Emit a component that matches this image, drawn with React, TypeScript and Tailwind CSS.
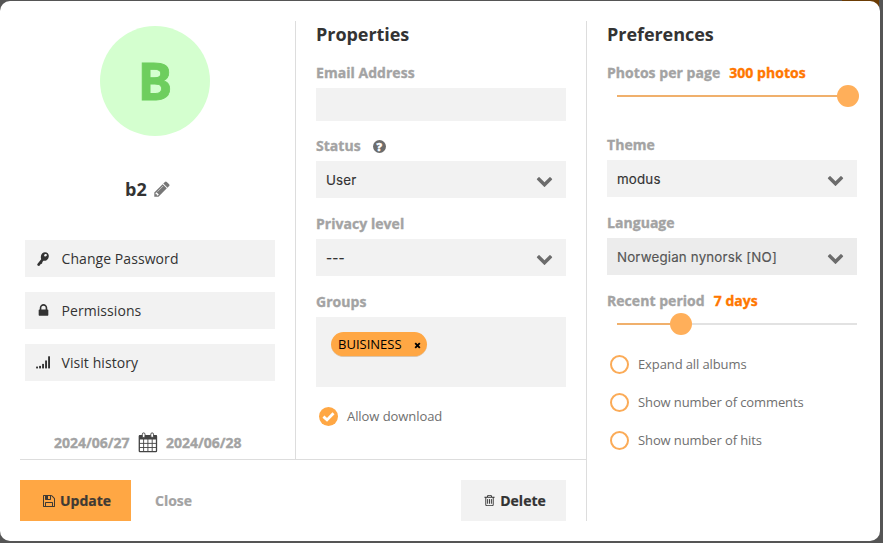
import type { ReactNode } from "react";

function FaGlyph({ d, className }: { d: string; className: string }) {
  return (
    <svg viewBox="0 0 1792 1792" fill="currentColor" className={className}>
      <path d={d} />
    </svg>
  );
}

const CHEVRON =
  "M1683 808l-742 741q-19 19-45 19t-45-19l-742-741q-19-19-19-45.5t19-45.5l166-165q19-19 45-19t45 19l531 531 531-531q19-19 45-19t45 19l166 165q19 19 19 45.5t-19 45.5z";
const PENCIL =
  "M491 1536l91-91-235-235-91 91v107h128v128h107zm523-928q0-22-22-22-10 0-17 7l-542 542q-7 7-7 17 0 22 22 22 10 0 17-7l542-542q7-7 7-17zm-54-192l416 416-832 832h-416v-416zm683 96q0 53-37 90l-166 166-416-416 166-165q36-38 90-38 53 0 91 38l235 234q37 39 37 91z";
const FLOPPY =
  "M512 1536h768v-384h-768v384zm896 0h128v-896q0-14-10-38.5t-20-34.5l-281-281q-10-10-34-20t-39-10v416q0 40-28 68t-68 28h-576q-40 0-68-28t-28-68v-416h-128v1280h128v-416q0-40 28-68t68-28h832q40 0 68 28t28 68v416zm-384-928v-320q0-13-9.5-22.5t-22.5-9.5h-192q-13 0-22.5 9.5t-9.5 22.5v320q0 13 9.5 22.5t22.5 9.5h192q13 0 22.5-9.5t9.5-22.5zm640 32v928q0 40-28 68t-68 28h-1344q-40 0-68-28t-28-68v-1344q0-40 28-68t68-28h928q40 0 88 20t76 48l280 280q28 28 48 76t20 88z";
const TRASH =
  "M704 736v576q0 14-9 23t-23 9h-64q-14 0-23-9t-9-23v-576q0-14 9-23t23-9h64q14 0 23 9t9 23zm256 0v576q0 14-9 23t-23 9h-64q-14 0-23-9t-9-23v-576q0-14 9-23t23-9h64q14 0 23 9t9 23zm256 0v576q0 14-9 23t-23 9h-64q-14 0-23-9t-9-23v-576q0-14 9-23t23-9h64q14 0 23 9t9 23zm128 724v-948h-896v948q0 22 7 40.5t14.5 27 10.5 8.5h832q3 0 10.5-8.5t14.5-27 7-40.5zm-672-1076h448l-48-117q-7-9-17-11h-317q-10 2-17 11zm928 32v64q0 14-9 23t-23 9h-96v948q0 83-47 143.5t-113 60.5h-832q-66 0-113-58.5t-47-141.5v-952h-96q-14 0-23-9t-9-23v-64q0-14 9-23t23-9h309l70-167q15-37 54-63t79-26h320q40 0 79 26t54 63l70 167h309q14 0 23 9t9 23z";
const LOCK =
  "M640 768h512v-192q0-106-75-181t-181-75-181 75-75 181v192zm832 96v576q0 40-28 68t-68 28h-960q-40 0-68-28t-28-68v-576q0-40 28-68t68-28h32v-192q0-184 132-316t316-132 316 132 132 316v192h32q40 0 68 28t28 68z";

function KeyIcon() {
  return (
    <svg viewBox="0 0 12 14" className="h-[14px] w-3" fill="none" stroke="currentColor">
      <path d="M5.6 7.6L1.6 12.6" strokeWidth="2.6" strokeLinecap="round" />
      <path d="M3.6 10.2L5 11.4" strokeWidth="1.6" />
      <path
        fill="currentColor"
        stroke="none"
        fillRule="evenodd"
        d="M8 0.2C10.3 0.2 11.8 1.7 11.8 4C11.8 6.6 10 8.8 7.5 8.8C5.200 8.800 3.800 7.400 3.800 5.200C3.800 2.400 5.600 0.200 8 0.200ZM8.600 2C7.800 2 7.100 2.700 7.100 3.400C7.100 4.100 7.700 4.500 8.400 4.500C9.200 4.500 9.900 3.900 9.900 3.100C9.900 2.400 9.400 2 8.600 2Z"
      />
    </svg>
  );
}

function SignalIcon() {
  return (
    <svg viewBox="0 0 15 13" className="h-[13px] w-[15px]" fill="currentColor">
      <rect x="0.100" y="10.600" width="1.900" height="1.800" />
      <rect x="3.100" y="9.900" width="1.900" height="2.500" />
      <rect x="6.100" y="7.900" width="1.900" height="4.500" />
      <rect x="9.100" y="4.500" width="1.900" height="7.900" />
      <rect x="12.100" y="0.300" width="1.900" height="12.100" />
    </svg>
  );
}

function CalendarIcon() {
  return (
    <svg viewBox="0 0 20 21" className="h-[21px] w-5 -translate-y-px" fill="none" stroke="#444">
      <rect x="1.300" y="3.600" width="17.200" height="16" rx="0.700" strokeWidth="1.300" />
      <path d="M1 3.500H19V7.500H1Z" fill="#444" stroke="none" />
      <path d="M5.600 7V20M9.900 7V20M14.200 7V20M1 11.400H19M1 15.500H19" strokeWidth="0.900" />
      <rect x="4.300" y="0.900" width="2.700" height="4.600" rx="1.300" fill="white" strokeWidth="0.900" />
      <rect x="12.800" y="0.900" width="2.700" height="4.600" rx="1.300" fill="white" strokeWidth="0.900" />
    </svg>
  );
}

function Label({ children }: { children: ReactNode }) {
  return (
    <div className="flex h-5 items-center whitespace-pre text-sm font-bold leading-5 tracking-[0.04px] text-[#a3a3a3] [-webkit-text-stroke:0.35px]">
      {children}
    </div>
  );
}

function Select({ value, dim = false }: { value: string; dim?: boolean }) {
  return (
    <div
      className={`flex h-[37px] w-[250px] items-center justify-between pr-[13px] pl-[10px] font-[Inter,sans-serif] text-[13.333px] tracking-[0.17px] [-webkit-text-stroke:0.15px] ${
        dim ? "bg-[#ececec] text-[#555]" : "bg-[#f2f2f2] text-[#333]"
      }`}
    >
      <span className="pt-0.5">{value}</span>
      <FaGlyph d={CHEVRON} className="mt-0.5 size-[17px] text-[#6c6c6c]" />
    </div>
  );
}

function Action({ icon, children }: { icon: ReactNode; children: ReactNode }) {
  return (
    <div className="flex h-[37px] w-[250px] items-center bg-[#f2f2f2] text-sm tracking-[0.07px] text-[#333]">
      <span className="flex w-[36.5px] justify-center">{icon}</span>
      <span>{children}</span>
    </div>
  );
}

function Slider({ percent }: { percent: number }) {
  return (
    <div className="relative ml-[10px] h-0.5 w-60 bg-[#e2e2e2]">
      <div className="h-full bg-[#f0b06c]" style={{ width: `${percent}%` }} />
      <span
        className="absolute -top-[10px] -ml-[11px] size-[22px] rounded-full bg-[#ffaf5a]"
        style={{ left: `${percent}%` }}
      />
    </div>
  );
}

function Option({ children }: { children: ReactNode }) {
  return (
    <div className="flex h-[38px] items-center gap-[9px] pl-[3px] text-[13px] tracking-[-0.11px] text-[#6f6f6f]">
      <span className="size-[19px] rounded-full border-2 border-[#fbab57]" />
      <span className="pt-0.5">{children}</span>
    </div>
  );
}

export default function App() {
  return (
    <div className="h-[543px] w-[883px] overflow-hidden bg-[#555] bg-[linear-gradient(#6b3c05,#6b3c05)] bg-[length:37px_8px] bg-[position:842px_0] bg-no-repeat pt-px font-['Open_Sans',sans-serif] text-[#333]">
      <div className="flex h-[540px] w-[880px] rounded-[10px] bg-white pt-5 pl-5">
        <div className="h-[500px] w-[567px] border-r border-[#ddd]">
          <div className="flex h-[439px] border-b border-[#ddd]">
            <section className="flex w-[276px] flex-col border-r border-[#ddd] pl-[5px]">
              <div className="mt-[5px] ml-[75px] flex size-[110px] items-center justify-center rounded-full bg-[#d4ffcf] pb-0.5 text-[52px] font-bold leading-none text-[#6ece5e] [-webkit-text-stroke:0.8px]">
                B
              </div>
              <div className="mt-[41px] flex h-6 items-center pl-[100px] text-lg font-bold">
                b2
                <FaGlyph d={PENCIL} className="ml-[6px] size-[18px] text-[#777]" />
              </div>
              <div className="mt-[39px] flex flex-col gap-[15px]">
                <Action icon={<KeyIcon />}>Change Password</Action>
                <Action icon={<FaGlyph d={LOCK} className="size-[15px]" />}>Permissions</Action>
                <Action icon={<SignalIcon />}>Visit history</Action>
              </div>
              <div className="mt-[51px] flex h-[22px] items-center pl-[29px] text-sm font-bold text-[#a3a3a3] [-webkit-text-stroke:0.35px]">
                <span className="w-[84px]">2024/06/27</span>
                <CalendarIcon />
                <span className="ml-2">2024/06/28</span>
              </div>
            </section>
            <section className="w-[290px] pl-5">
              <h2 className="flex h-[25px] items-center text-lg font-bold tracking-[-0.05px]">Properties</h2>
              <div className="mt-[17px]">
                <Label>Email Address</Label>
              </div>
              <div className="mt-[5px] h-[33px] w-[250px] bg-[#f2f2f2]" />
              <div className="mt-[15px]">
                <Label>
                  Status
                  <span className="ml-3 flex size-[13px] items-center justify-center rounded-full bg-[#6c6c6c] text-[11px] font-extrabold leading-none text-white">
                    ?
                  </span>
                </Label>
              </div>
              <div className="mt-[5px]">
                <Select value="User" />
              </div>
              <div className="mt-4">
                <Label>Privacy level</Label>
              </div>
              <div className="mt-[5px]">
                <Select value="---" />
              </div>
              <div className="mt-4">
                <Label>Groups</Label>
              </div>
              <div className="mt-[5px] h-[70px] w-[250px] bg-[#f2f2f2] pt-[15px] pl-[15px]">
                <div className="flex h-[25px] w-24 items-center justify-between rounded-full border-b border-[#d9c5ad] bg-[#ffa744] pt-0.5 pr-[6px] pl-[7px] text-[13px] text-black">
                  <span>BUISINESS</span>
                  <svg viewBox="0 0 7 7" className="size-[7px]" stroke="currentColor" strokeWidth="1.900">
                    <path d="M1.200 1.200L5.800 5.800M5.800 1.200L1.200 5.800" />
                  </svg>
                </div>
              </div>
              <div className="mt-[19px] flex h-5 items-center gap-[9px] pl-[3px] text-[13px] tracking-[-0.07px] text-[#6f6f6f]">
                <svg viewBox="0 0 19 19" className="size-[19px]">
                  <circle cx="9.500" cy="9.500" r="9.500" fill="#ffa744" />
                  <path d="M4.400 9.600L8 12.900L14.500 6.200" fill="none" stroke="white" strokeWidth="2.800" />
                </svg>
                <span className="pt-0.5">Allow download</span>
              </div>
            </section>
          </div>
          <div className="flex items-center pt-5 text-sm font-bold [-webkit-text-stroke:0.2px]">
            <button className="flex h-[41px] w-[111px] items-center justify-center gap-1 bg-[#ffa744] pl-0.5 text-[#3f3a34]">
              <FaGlyph d={FLOPPY} className="size-[14px]" />
              Update
            </button>
            <button className="ml-6 text-[#a3a3a3]">Close</button>
            <button className="mr-5 ml-auto flex h-[41px] w-[105px] items-center justify-center gap-1 bg-[#f2f2f2] pl-0.5">
              <FaGlyph d={TRASH} className="size-[13px]" />
              Delete
            </button>
          </div>
        </div>
        <section className="w-[270px] pl-5">
          <h2 className="flex h-[25px] items-center text-lg font-bold tracking-[-0.05px]">Preferences</h2>
          <div className="mt-[17px]">
            <Label>
              Photos per page<span className="ml-[9px] text-[#ff7700]">300 photos</span>
            </Label>
          </div>
          <div className="mt-3">
            <Slider percent={96.25} />
          </div>
          <div className="mt-[38px]">
            <Label>Theme</Label>
          </div>
          <div className="mt-[5px]">
            <Select value="modus" />
          </div>
          <div className="mt-4">
            <Label>Language</Label>
          </div>
          <div className="mt-[5px]">
            <Select value="Norwegian nynorsk [NO]" dim />
          </div>
          <div className="mt-4">
            <Label>
              Recent period<span className="ml-[9px] text-[#ff7700]">7 days</span>
            </Label>
          </div>
          <div className="mt-3">
            <Slider percent={26.8} />
          </div>
          <div className="mt-5">
            <Option>Expand all albums</Option>
            <Option>Show number of comments</Option>
            <Option>Show number of hits</Option>
          </div>
        </section>
      </div>
    </div>
  );
}
